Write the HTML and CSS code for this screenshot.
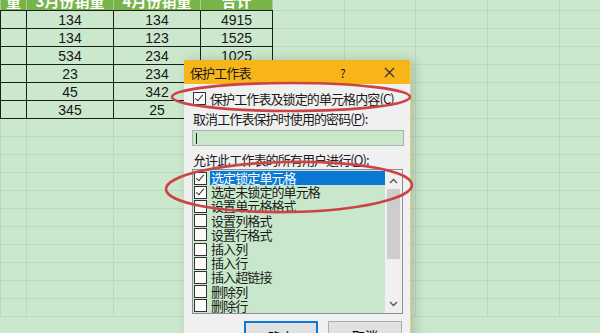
FILE: index.html
```html
<!DOCTYPE html>
<html lang="zh-CN">
<head>
    <meta charset="UTF-8">
    <meta name="viewport" content="width=device-width, initial-scale=1.0">
    <title>保护工作表</title>
    <link rel="stylesheet" href="styles.css">
</head>
<body>
    <table class="sheet">
        <colgroup>
            <col style="width:26px"><col style="width:87px"><col style="width:87px">
            <col style="width:72px"><col style="width:72px"><col style="width:71px">
            <col style="width:72px"><col style="width:72px"><col style="width:72px">
        </colgroup>
        <tr class="head">
            <td class="d">量</td><td class="d">3月份销量</td><td class="d">4月份销量</td><td class="d">合计</td>
            <td></td><td></td><td></td><td></td><td></td>
        </tr>
        <tr><td class="d"></td><td class="d">134</td><td class="d">134</td><td class="d">4915</td><td></td><td></td><td></td><td></td><td></td></tr>
        <tr><td class="d"></td><td class="d">134</td><td class="d">123</td><td class="d">1525</td><td></td><td></td><td></td><td></td><td></td></tr>
        <tr><td class="d"></td><td class="d">534</td><td class="d">234</td><td class="d">1025</td><td></td><td></td><td></td><td></td><td></td></tr>
        <tr><td class="d"></td><td class="d">23</td><td class="d">234</td><td class="d"></td><td></td><td></td><td></td><td></td><td></td></tr>
        <tr><td class="d"></td><td class="d">45</td><td class="d">342</td><td class="d"></td><td></td><td></td><td></td><td></td><td></td></tr>
        <tr><td class="d"></td><td class="d">345</td><td class="d">25</td><td class="d"></td><td></td><td></td><td></td><td></td><td></td></tr>
        <tr><td></td><td></td><td></td><td></td><td></td><td></td><td></td><td></td><td></td></tr>
        <tr><td></td><td></td><td></td><td></td><td></td><td></td><td></td><td></td><td></td></tr>
        <tr><td></td><td></td><td></td><td></td><td></td><td></td><td></td><td></td><td></td></tr>
        <tr><td></td><td></td><td></td><td></td><td></td><td></td><td></td><td></td><td></td></tr>
        <tr><td></td><td></td><td></td><td></td><td></td><td></td><td></td><td></td><td></td></tr>
        <tr><td></td><td></td><td></td><td></td><td></td><td></td><td></td><td></td><td></td></tr>
        <tr><td></td><td></td><td></td><td></td><td></td><td></td><td></td><td></td><td></td></tr>
        <tr><td></td><td></td><td></td><td></td><td></td><td></td><td></td><td></td><td></td></tr>
        <tr><td></td><td></td><td></td><td></td><td></td><td></td><td></td><td></td><td></td></tr>
        <tr><td></td><td></td><td></td><td></td><td></td><td></td><td></td><td></td><td></td></tr>
        <tr><td></td><td></td><td></td><td></td><td></td><td></td><td></td><td></td><td></td></tr>
    </table>

    <div class="dialog">
        <div class="title-bar">
            <span class="title">保护工作表</span>
            <span class="help">?</span>
            <span class="close">
                <svg width="11" height="11" viewBox="0 0 11 11"><path d="M1 1L10 10M10 1L1 10" stroke="#333" stroke-width="1.2"/></svg>
            </span>
        </div>
        <div class="dialog-body">
            <label class="check-row">
                <span class="box checked"></span>
                <span>保护工作表及锁定的单元格内容(<u>C</u>)</span>
            </label>
            <div class="label">取消工作表保护时使用的密码(<u>P</u>):</div>
            <div class="password"><span class="caret"></span></div>
            <div class="label">允许此工作表的所有用户进行(<u>O</u>):</div>
            <div class="listbox">
                <ul class="options">
                    <li><span class="box checked"></span><span class="opt selected">选定锁定单元格</span></li>
                    <li><span class="box checked"></span><span class="opt">选定未锁定的单元格</span></li>
                    <li><span class="box"></span><span class="opt">设置单元格格式</span></li>
                    <li><span class="box"></span><span class="opt">设置列格式</span></li>
                    <li><span class="box"></span><span class="opt">设置行格式</span></li>
                    <li><span class="box"></span><span class="opt">插入列</span></li>
                    <li><span class="box"></span><span class="opt">插入行</span></li>
                    <li><span class="box"></span><span class="opt">插入超链接</span></li>
                    <li><span class="box"></span><span class="opt">删除列</span></li>
                    <li><span class="box"></span><span class="opt">删除行</span></li>
                </ul>
                <div class="scrollbar">
                    <svg class="arrow" width="9" height="6" viewBox="0 0 9 6"><path d="M1 5L4.5 1.5L8 5" fill="none" stroke="#555" stroke-width="1.3"/></svg>
                    <div class="thumb"></div>
                    <svg class="arrow down" width="9" height="6" viewBox="0 0 9 6"><path d="M1 1L4.5 4.5L8 1" fill="none" stroke="#555" stroke-width="1.3"/></svg>
                </div>
            </div>
            <div class="buttons">
                <button class="btn primary">确定</button>
                <button class="btn">取消</button>
            </div>
        </div>
    </div>

    <svg class="marks" width="600" height="333" viewBox="0 0 600 333">
        <ellipse cx="291" cy="97" rx="119" ry="14" fill="none" stroke="#cc4346" stroke-width="2.6"/>
        <ellipse cx="289" cy="187" rx="123" ry="25" fill="none" stroke="#cc4346" stroke-width="2.6" transform="rotate(-1 289 187)"/>
    </svg>
</body>
</html>
```

FILE: styles.css
```css
body {
    margin: 0;
    background: #cbe8cd;
    font-family: "Noto Sans CJK SC", "Liberation Sans", sans-serif;
    width: 600px;
    height: 333px;
    overflow: hidden;
    position: relative;
}

.sheet {
    border-collapse: collapse;
    table-layout: fixed;
    margin-top: -14px;
    width: 631px;
}

.sheet tr {
    height: 18px;
}

.sheet tr.head {
    height: 24px;
}

.sheet td {
    border: 1px solid #bfd7c2;
    padding: 0;
    text-align: center;
    font-family: "Liberation Sans", "Noto Sans CJK SC", sans-serif;
    font-size: 14px;
    line-height: 16px;
    color: #161616;
    overflow: hidden;
    white-space: nowrap;
}

.sheet td.d {
    border-color: #1d1d1d;
}

.sheet .head td.d {
    background: #78b44a;
    color: #fff;
    font-family: "Noto Sans CJK SC", sans-serif;
    font-weight: bold;
    font-size: 15px;
    line-height: 16px;
    border-color: #1d1d1d #a4cf86;
    vertical-align: bottom;
    padding-bottom: 1px;
}

.sheet .head td.d:first-child {
    text-align: right;
    padding-right: 5px;
}

/* dialog */
.dialog {
    position: absolute;
    left: 184px;
    top: 60px;
    width: 226px;
    height: 290px;
    background: #f0f0f0;
    border-right: 1px solid #e9cf75;
    box-shadow: 4px 0 10px rgba(60, 80, 60, 0.25);
    font-size: 13px;
    letter-spacing: -0.9px;
    color: #1a1a1a;
    white-space: nowrap;
}

.title-bar {
    height: 24px;
    background: #f7b519;
    display: flex;
    align-items: center;
    padding-left: 6px;
}

.title {
    flex: 1;
}

.help {
    width: 44px;
    font-size: 12px;
}

.close {
    width: 26px;
    display: flex;
    align-items: center;
}

.dialog-body {
    padding: 7px 8px 0 9px;
}

.check-row {
    display: flex;
    align-items: center;
    gap: 4px;
    height: 14px;
}

.box {
    width: 11px;
    height: 11px;
    border: 1px solid #333;
    background: #fbfbfb;
    flex: none;
    position: relative;
}

.box.checked::after {
    content: "";
    position: absolute;
    left: 3px;
    top: 0px;
    width: 3px;
    height: 7px;
    border: solid #333;
    border-width: 0 1.5px 1.5px 0;
    transform: rotate(40deg);
}

u {
    text-decoration: underline;
}

.label {
    margin-top: 6px;
    height: 16px;
    line-height: 16px;
}

.password {
    height: 14px;
    border: 1px solid #a9b4ab;
    background: #c9e8cb;
    margin: 3px 0 0 -1px;
    width: 207px;
    display: flex;
    align-items: center;
    padding-left: 3px;
}

.caret {
    width: 1px;
    height: 11px;
    background: #222;
}

.listbox {
    margin: 1px 0 0 -1px;
    width: 209px;
    height: 143px;
    border: 1px solid #8a8f99;
    background: #c9e8cb;
    display: flex;
    overflow: hidden;
}

.options {
    list-style: none;
    margin: 0;
    padding: 1px 0 0 1px;
    flex: 1;
}

.options li {
    height: 14.2px;
    line-height: 14px;
    display: flex;
    align-items: center;
    gap: 3px;
}

.opt {
    flex: 1;
    line-height: 14px;
    padding-left: 1px;
}

.opt.selected {
    background: #0b78d6;
    color: #fff;
}

.scrollbar {
    width: 17px;
    background: #f0f0f0;
    display: flex;
    flex-direction: column;
    align-items: center;
    padding-top: 8px;
}

.thumb {
    width: 13px;
    height: 70px;
    background: #cdcdcd;
    margin-top: 5px;
}

.arrow.down {
    margin-top: auto;
    margin-bottom: 6px;
}

.buttons {
    display: flex;
    justify-content: flex-end;
    gap: 10px;
    margin-top: 7px;
}

.btn {
    width: 74px;
    height: 24px;
    border: 1px solid #adadad;
    background: #e1e1e1;
    font-family: "Noto Sans CJK SC", sans-serif;
    font-size: 13px;
    padding: 4px 0 0;
}

.btn.primary {
    border: 2px solid #0a78d4;
}

.marks {
    position: absolute;
    left: 0;
    top: 0;
    pointer-events: none;
}
```
